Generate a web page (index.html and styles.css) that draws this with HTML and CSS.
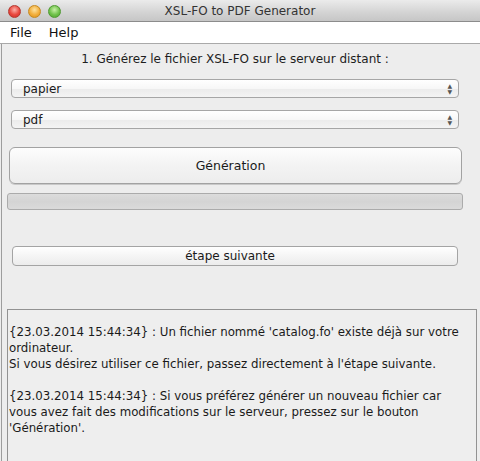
FILE: index.html
```html
<!DOCTYPE html>
<html lang="fr">
<head>
    <meta charset="UTF-8">
    <meta name="viewport" content="width=device-width, initial-scale=1.0">
    <title>XSL-FO to PDF Generator</title>
    <link rel="stylesheet" href="styles.css">
</head>
<body>

<div class="window">
    <div class="titlebar">
        <div class="lights">
            <span class="light red"></span>
            <span class="light yellow"></span>
            <span class="light green"></span>
        </div>
        <span class="title">XSL-FO to PDF Generator</span>
    </div>

    <div class="menubar">
        <span class="menu">File</span>
        <span class="menu">Help</span>
    </div>

    <div class="content">
        <p class="step">1. Générez le fichier XSL-FO sur le serveur distant :</p>

        <div class="select select-first">
            <span>papier</span>
            <span class="arrows">&#9650;<br>&#9660;</span>
        </div>
        <div class="select">
            <span>pdf</span>
            <span class="arrows">&#9650;<br>&#9660;</span>
        </div>

        <button class="btn btn-big">Génération</button>

        <div class="progress"></div>

        <button class="btn btn-next">étape suivante</button>

        <div class="log">{23.03.2014 15:44:34} : Un fichier nommé 'catalog.fo' existe déjà sur votre
ordinateur.
Si vous désirez utiliser ce fichier, passez directement à l'étape suivante.

{23.03.2014 15:44:34} : Si vous préférez générer un nouveau fichier car
vous avez fait des modifications sur le serveur, pressez sur le bouton
'Génération'.</div>
    </div>
</div>

</body>
</html>
```

FILE: styles.css
```css
html, body {
    margin: 0;
    padding: 0;
    height: 461px;
    overflow: hidden;
}

body {
    font-family: "DejaVu Sans", "Liberation Sans", sans-serif;
    font-size: 12px;
    color: #1a1a1a;
    background-color: #ededed;
}

.window {
    display: flex;
    flex-direction: column;
    height: 461px;
}

/* barre de titre */
.titlebar {
    position: relative;
    height: 22px;
    background: linear-gradient(#ebebeb, #d3d3d3 60%, #c6c6c6);
    border-bottom: 1px solid #8c8c8c;
    box-sizing: border-box;
    text-align: center;
}

.title {
    line-height: 22px;
    font-size: 12px;
    color: #333;
}

.lights {
    position: absolute;
    left: 8px;
    top: 5px;
    display: flex;
    gap: 7px;
}

.light {
    width: 13px;
    height: 13px;
    border-radius: 50%;
    box-sizing: border-box;
}

.red {
    background: radial-gradient(circle at 50% 35%, #fbb0a8, #e9473d 55%, #c9302a);
    border: 1px solid #b5382f;
}

.yellow {
    background: radial-gradient(circle at 50% 35%, #fde2a0, #f2ae3b 55%, #d98e1a);
    border: 1px solid #c7891f;
}

.green {
    background: radial-gradient(circle at 50% 35%, #c9f0a8, #6fc24a 55%, #4e9f2d);
    border: 1px solid #4f9a31;
}

/* menu */
.menubar {
    height: 22px;
    background-color: #fff;
    border-bottom: 1px solid #a9a9a9;
    box-sizing: border-box;
    padding-left: 10px;
    display: flex;
    gap: 17px;
    align-items: center;
    font-size: 13px;
    color: #111;
}

/* contenu */
.content {
    flex: 1;
    display: flex;
    flex-direction: column;
    margin-left: 1px;
    border-left: 1px solid #9d9d9d;
    min-height: 0;
}

.step {
    margin: 8px 0 0;
    padding-right: 12px;
    line-height: 14px;
    text-align: center;
    color: #1e1e1e;
}

.select {
    margin: 12px 21px 0 9px;
    height: 19px;
    box-sizing: border-box;
    border: 1px solid #a6a6a6;
    border-radius: 4px;
    background: linear-gradient(#ffffff, #f7f7f7 50%, #ececec 55%, #f4f4f4);
    display: flex;
    align-items: center;
    justify-content: space-between;
    padding: 0 6px 0 11px;
    font-size: 12px;
}

.select-first {
    margin-top: 13px;
}

.arrows {
    font-size: 6px;
    line-height: 6px;
    color: #555;
    text-align: center;
}

.btn {
    font-family: inherit;
    font-size: 12px;
    color: #1a1a1a;
    box-sizing: border-box;
    cursor: pointer;
    padding: 0;
}

.btn-big {
    margin: 18px 18px 0 7px;
    height: 37px;
    border: 1px solid #a2a2a2;
    border-radius: 6px;
    background: linear-gradient(#fdfdfd, #f3f3f3 50%, #ededed);
    box-shadow: 0 1px 0 #c9c9c9;
    font-size: 12.5px;
    padding-right: 10px;
}

.progress {
    margin: 9px 17px 0 5px;
    height: 17px;
    box-sizing: border-box;
    border: 1px solid #ababab;
    border-radius: 3px;
    background: linear-gradient(#dcdcdc, #d4d4d4 50%, #dadada);
}

.btn-next {
    margin: 36px 22px 0 10px;
    height: 20px;
    border: 1px solid #a4a4a4;
    border-radius: 4px;
    background: linear-gradient(#ffffff, #f5f5f5 50%, #ececec);
    padding-right: 10px;
}

.log {
    flex: 1;
    margin: 43px 3px 0 5px;
    border: 1px solid #929292;
    border-bottom: none;
    background-color: #eeeeee;
    padding: 14px 0 0 1px;
    white-space: pre-line;
    font-size: 11.8px;
    line-height: 16px;
    color: #1a1a1a;
}
```
